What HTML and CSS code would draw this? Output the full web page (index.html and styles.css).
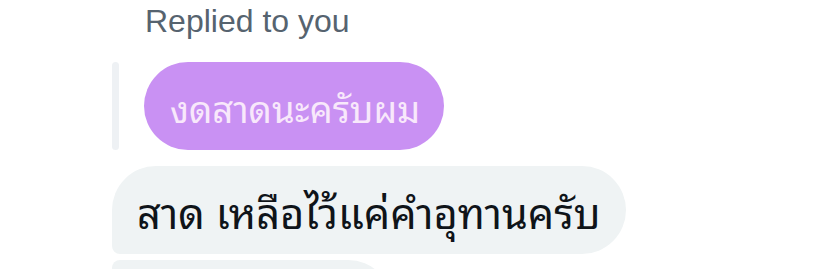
FILE: index.html
```html
<!DOCTYPE html>
<html lang="th">
<head>
<meta charset="utf-8">
<link rel="stylesheet" href="styles.css">
</head>
<body>
<div class="thread">
  <div class="replied">Replied to you</div>
  <div class="quote">
    <div class="quote-bar"></div>
    <div class="bubble bubble-quote">งดสาดนะครับผม</div>
  </div>
  <div class="bubble bubble-in first">สาด เหลือไว้แค่คำอุทานครับ</div>
  <div class="bubble bubble-in next">&nbsp;</div>
</div>
</body>
</html>
```
FILE: styles.css
```css
html, body {
  margin: 0;
  padding: 0;
  background: #ffffff;
  overflow: hidden;
  height: 269px;
}
.thread {
  padding-left: 112px;
  display: flex;
  flex-direction: column;
  align-items: flex-start;
  font-family: "Noto Sans Thai Looped", "Noto Sans Thai", "Noto Sans", "Liberation Sans", sans-serif;
}
.replied {
  font-family: "Liberation Sans", Arial, sans-serif;
  font-size: 32px;
  line-height: 40px;
  color: #56636f;
  margin-left: 33px;
  margin-top: 1px;
}
.quote {
  display: flex;
  align-items: stretch;
  gap: 25px;
  margin-top: 21px;
}
.quote-bar {
  width: 7px;
  border-radius: 4px;
  background: #eef1f4;
}
.bubble {
  box-sizing: border-box;
  height: 88px;
  display: flex;
  align-items: center;
  padding: 0 26px;
  white-space: nowrap;
  overflow: hidden;
}
.bubble-quote {
  width: 300px;
  border-radius: 44px;
  background: #c991f3;
  color: #f8e8fb;
  font-size: 36.5px;
}
.bubble-in {
  background: #eff3f4;
  color: #0f1419;
  font-size: 41.5px;
}
.first {
  width: 514px;
  margin-top: 16px;
  border-radius: 44px 44px 44px 8px;
  padding-left: 25px;
}
.next {
  width: 280px;
  margin-top: 6px;
  border-radius: 8px 44px 44px 44px;
}
```
